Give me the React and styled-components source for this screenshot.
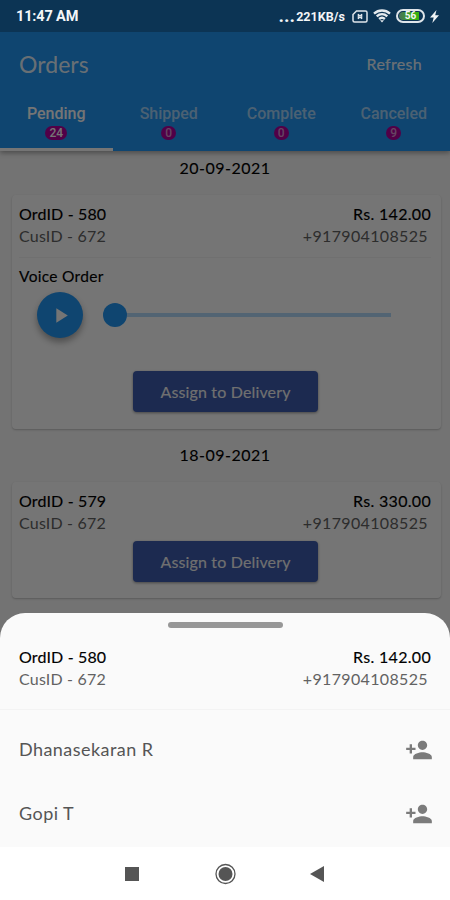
import React from "react";
import styled, { createGlobalStyle } from "styled-components";
import { MdPersonAdd, MdPlayArrow } from "react-icons/md";

const GlobalStyle = createGlobalStyle`
  * {
    box-sizing: border-box;
  }
  body {
    margin: 0;
    background: #fff;
    font-family: Lato, "Open Sans", sans-serif;
  }
`;

const Screen = styled.div`
  position: relative;
  width: 450px;
  height: 900px;
  overflow: hidden;
  display: flex;
  flex-direction: column;
  background: #fafafa;
`;

const StatusBar = styled.div`
  position: relative;
  z-index: 2;
  flex: none;
  height: 32px;
  padding: 0 11px 0 16px;
  display: flex;
  align-items: center;
  background: #0c3454;
  color: #f4f6f8;
  font-family: Roboto, sans-serif;
  font-weight: 700;
  font-size: 14px;
  .time {
    flex: 1;
    font-size: 14.5px;
    letter-spacing: -0.15px;
  }
  .speed {
    font-size: 12.5px;
    letter-spacing: 0.05px;
  }
  .dots {
    margin-right: 1px;
    letter-spacing: 0;
    font-size: 19px;
    line-height: 19px;
    margin-top: -1px;
  }
  svg {
    display: block;
  }
`;

const StatusIcons = styled.div`
  display: flex;
  align-items: center;
  gap: 5px;
  margin-left: 7px;
`;

const Header = styled.div`
  flex: none;
  height: 119px;
  background: #2196f3;
  color: #fff;
  box-shadow: 0 2px 5px rgba(0, 0, 0, 0.35);
  z-index: 1;
`;

const Toolbar = styled.div`
  height: 64px;
  padding: 0 28px 1px 19px;
  display: flex;
  align-items: center;
  justify-content: space-between;
  color: rgba(255, 255, 255, 0.9);
  .title {
    font-size: 23px;
    letter-spacing: 0.05px;
  }
  .refresh {
    font-size: 16px;
    letter-spacing: 0.3px;
    -webkit-text-stroke: 0.2px;
  }
`;

const Tabs = styled.div`
  display: grid;
  grid-template-columns: repeat(4, 1fr);
  height: 55px;
`;

const Tab = styled.div`
  display: flex;
  flex-direction: column;
  align-items: center;
  padding-top: 9px;
  border-bottom: 3px solid ${(props) => (props.$active ? "#fff" : "transparent")};
  font-family: Roboto, sans-serif;
  font-weight: 500;
  font-size: 16px;
  line-height: 18px;
  letter-spacing: 0;
  color: ${(props) => (props.$active ? "#fff" : "rgba(255, 255, 255, 0.6)")};
`;

const Badge = styled.span`
  min-width: 15px;
  height: 14px;
  margin-top: 3px;
  padding: 0 4px;
  border-radius: 7px;
  background: #b0009c;
  font-size: 12px;
  line-height: 14px;
  text-align: center;
`;

const DateLabel = styled.div`
  flex: none;
  height: ${(props) => props.$height}px;
  padding-top: ${(props) => props.$top}px;
  text-align: center;
  font-size: 16px;
  line-height: 20px;
  letter-spacing: 0.5px;
  color: #000;
  -webkit-text-stroke: 0.12px;
`;

const Card = styled.div`
  flex: none;
  height: ${(props) => props.$height}px;
  margin: 0 9px 0 12px;
  padding: 8px 10px 0 7px;
  border-radius: 4px;
  background: #fff;
  box-shadow: 0 1px 2px rgba(0, 0, 0, 0.22);
`;

const Line = styled.div`
  display: flex;
  justify-content: space-between;
  height: 22px;
  font-size: 16px;
  line-height: 22px;
  letter-spacing: 0.15px;
  color: #000;
  -webkit-text-stroke: 0.15px;
  .amount {
    letter-spacing: 0.3px;
  }
`;

const SubLine = styled(Line)`
  padding-right: 3px;
  letter-spacing: 0.2px;
  color: #626262;
  -webkit-text-stroke: 0;
  .phone {
    letter-spacing: 0.35px;
  }
`;

const VoiceOrder = styled.div`
  margin-top: 10px;
  padding-top: 8px;
  border-top: 1px solid #f4f4f4;
  height: 114px;
  font-size: 15.5px;
  line-height: 20px;
  letter-spacing: 0.3px;
  -webkit-text-stroke: 0.12px;
`;

const Player = styled.div`
  display: flex;
  align-items: center;
  height: 46px;
  margin-top: 6px;
  padding: 0 40px 0 18px;
  -webkit-text-stroke: 0;
`;

const PlayButton = styled.div`
  width: 46px;
  height: 46px;
  border-radius: 50%;
  display: flex;
  align-items: center;
  justify-content: center;
  background: #2196f3;
  color: #fff;
  box-shadow: 0 4px 7px rgba(0, 0, 0, 0.35);
`;

const Thumb = styled.div`
  width: 24px;
  height: 24px;
  margin-left: 20px;
  border-radius: 50%;
  background: #2196f3;
`;

const Track = styled.div`
  flex: 1;
  height: 4px;
  background: #b3dbfb;
`;

const AssignButton = styled.div`
  width: 185px;
  height: 41px;
  margin: ${(props) => props.$top || 0}px 0 0 114px;
  border-radius: 4px;
  background: #3d5cae;
  color: #f4f4f4;
  text-align: center;
  font-size: 16px;
  line-height: 41px;
  letter-spacing: 0.15px;
  -webkit-text-stroke: 0.1px;
  box-shadow: 0 1px 3px rgba(0, 0, 0, 0.4);
`;

const Scrim = styled.div`
  position: absolute;
  inset: 0;
  z-index: 1;
  background: rgba(0, 0, 0, 0.54);
`;

const Sheet = styled.div`
  position: absolute;
  z-index: 2;
  left: 0;
  right: 0;
  bottom: 0;
  height: 287px;
  display: flex;
  flex-direction: column;
  border-radius: 25px 25px 0 0;
  overflow: hidden;
  background: #fafafa;
`;

const Handle = styled.div`
  width: 115px;
  height: 6px;
  margin: 9px auto 0 168px;
  border-radius: 3px;
  background: #979797;
`;

const SheetOrder = styled.div`
  height: 82px;
  padding: 18px 19px 0;
  border-bottom: 1px solid #f3f3f3;
`;

const Agent = styled.div`
  display: flex;
  align-items: center;
  justify-content: space-between;
  height: 64px;
  padding: 0 17px 0 19px;
  font-size: 18px;
  letter-spacing: 0.45px;
  color: #555;
  span {
    margin-top: -2px;
  }
  svg {
    color: #7b7b7b;
  }
`;

const Agents = styled.div`
  flex: 1;
  padding-top: 8px;
`;

const NavBar = styled.div`
  flex: none;
  height: 53px;
  display: flex;
  align-items: center;
  justify-content: space-between;
  padding: 0 126px 0 124px;
  background: #fff;
  svg {
    display: block;
  }
`;

const tabs = [
  { name: "Pending", count: 24 },
  { name: "Shipped", count: 0 },
  { name: "Complete", count: 0 },
  { name: "Canceled", count: 9 },
];

const agents = ["Dhanasekaran R", "Gopi T"];

const SimIcon = () => (
  <svg width="16" height="13" viewBox="0 0 16 13" fill="none" stroke="#dfe5ea">
    <path d="M4.5 1H13.5a1.5 1.5 0 0 1 1.5 1.5v8a1.5 1.5 0 0 1-1.5 1.5h-11A1.5 1.5 0 0 1 1 10.5V4.5z" strokeWidth="1.5" />
    <path d="M6.3 4v5M9.7 4v5M6.3 4l3.4 5M9.7 4l-3.4 5" strokeWidth="1.2" />
  </svg>
);

const WifiIcon = () => (
  <svg width="18" height="14" viewBox="0 0 18 14" fill="none" stroke="#e6ebef">
    <path d="M1 4.6c4.6-4.2 11.4-4.2 16 0" strokeWidth="2.4" />
    <path d="M3.7 7.4c3.1-2.8 7.5-2.8 10.6 0" strokeWidth="2.4" />
    <path d="M6.1 10c1.7-1.5 4.1-1.5 5.8 0" strokeWidth="2.4" />
    <path d="M7 11.2h4l-2 2.3z" fill="#e6ebef" stroke="none" />
  </svg>
);

const Battery = styled.div`
  width: 29px;
  height: 14px;
  padding: 1px;
  border: 2px solid #dfe5ea;
  border-radius: 7px;
  span {
    display: block;
    height: 100%;
    border-radius: 4px;
    background: linear-gradient(90deg, #49705f 0, #37a51c 50%, #37b50c 88%, #0c3454 88%);
    font-size: 10px;
    line-height: 8px;
    text-align: center;
  }
`;

const BoltIcon = () => (
  <svg width="9" height="13" viewBox="0 0 9 13" fill="#f0f3f5">
    <path d="M6.5 0L0 7.5h3.7L2.3 13 9 5.3H5.2z" />
  </svg>
);

const OrderInfo = ({ id, amount }) => (
  <>
    <Line>
      <span>OrdID - {id}</span>
      <span className="amount">Rs. {amount}</span>
    </Line>
    <SubLine>
      <span>CusID - 672</span>
      <span className="phone">+917904108525</span>
    </SubLine>
  </>
);

const App = () => {
  return (
    <>
      <GlobalStyle />
      <Screen>
        <StatusBar>
          <span className="time">11:47 AM</span>
          <span className="dots">...</span>
          <span className="speed">221KB/s</span>
          <StatusIcons>
            <SimIcon />
            <WifiIcon />
            <Battery>
              <span>56</span>
            </Battery>
            <BoltIcon />
          </StatusIcons>
        </StatusBar>
        <Header>
          <Toolbar>
            <span className="title">Orders</span>
            <span className="refresh">Refresh</span>
          </Toolbar>
          <Tabs>
            {tabs.map((tab, i) => (
              <Tab key={tab.name} $active={i === 0}>
                {tab.name}
                <Badge>{tab.count}</Badge>
              </Tab>
            ))}
          </Tabs>
        </Header>
        <DateLabel $height={44} $top={7}>
          20-09-2021
        </DateLabel>
        <Card $height={234}>
          <OrderInfo id={580} amount="142.00" />
          <VoiceOrder>
            Voice Order
            <Player>
              <PlayButton>
                <MdPlayArrow size={25} />
              </PlayButton>
              <Thumb />
              <Track />
            </Player>
          </VoiceOrder>
          <AssignButton>Assign to Delivery</AssignButton>
        </Card>
        <DateLabel $height={53} $top={16}>
          18-09-2021
        </DateLabel>
        <Card $height={116}>
          <OrderInfo id={579} amount="330.00" />
          <AssignButton $top={7}>Assign to Delivery</AssignButton>
        </Card>
        <Scrim />
        <Sheet>
          <Handle />
          <SheetOrder>
            <OrderInfo id={580} amount="142.00" />
          </SheetOrder>
          <Agents>
            {agents.map((agent) => (
              <Agent key={agent}>
                <span>{agent}</span>
                <MdPersonAdd size={28} />
              </Agent>
            ))}
          </Agents>
          <NavBar>
            <svg width="15" height="14" viewBox="0 0 15 14">
              <rect x="1" width="14" height="14" fill="#555" />
            </svg>
            <svg width="22" height="22" viewBox="0 0 22 22">
              <circle cx="11.5" cy="11" r="9.5" fill="none" stroke="#555" strokeWidth="1.3" />
              <circle cx="11.5" cy="11" r="7" fill="#555" />
            </svg>
            <svg width="14" height="16" viewBox="0 0 14 16">
              <path d="M14 0v16L0 8z" fill="#555" />
            </svg>
          </NavBar>
        </Sheet>
      </Screen>
    </>
  );
};

export default App;
